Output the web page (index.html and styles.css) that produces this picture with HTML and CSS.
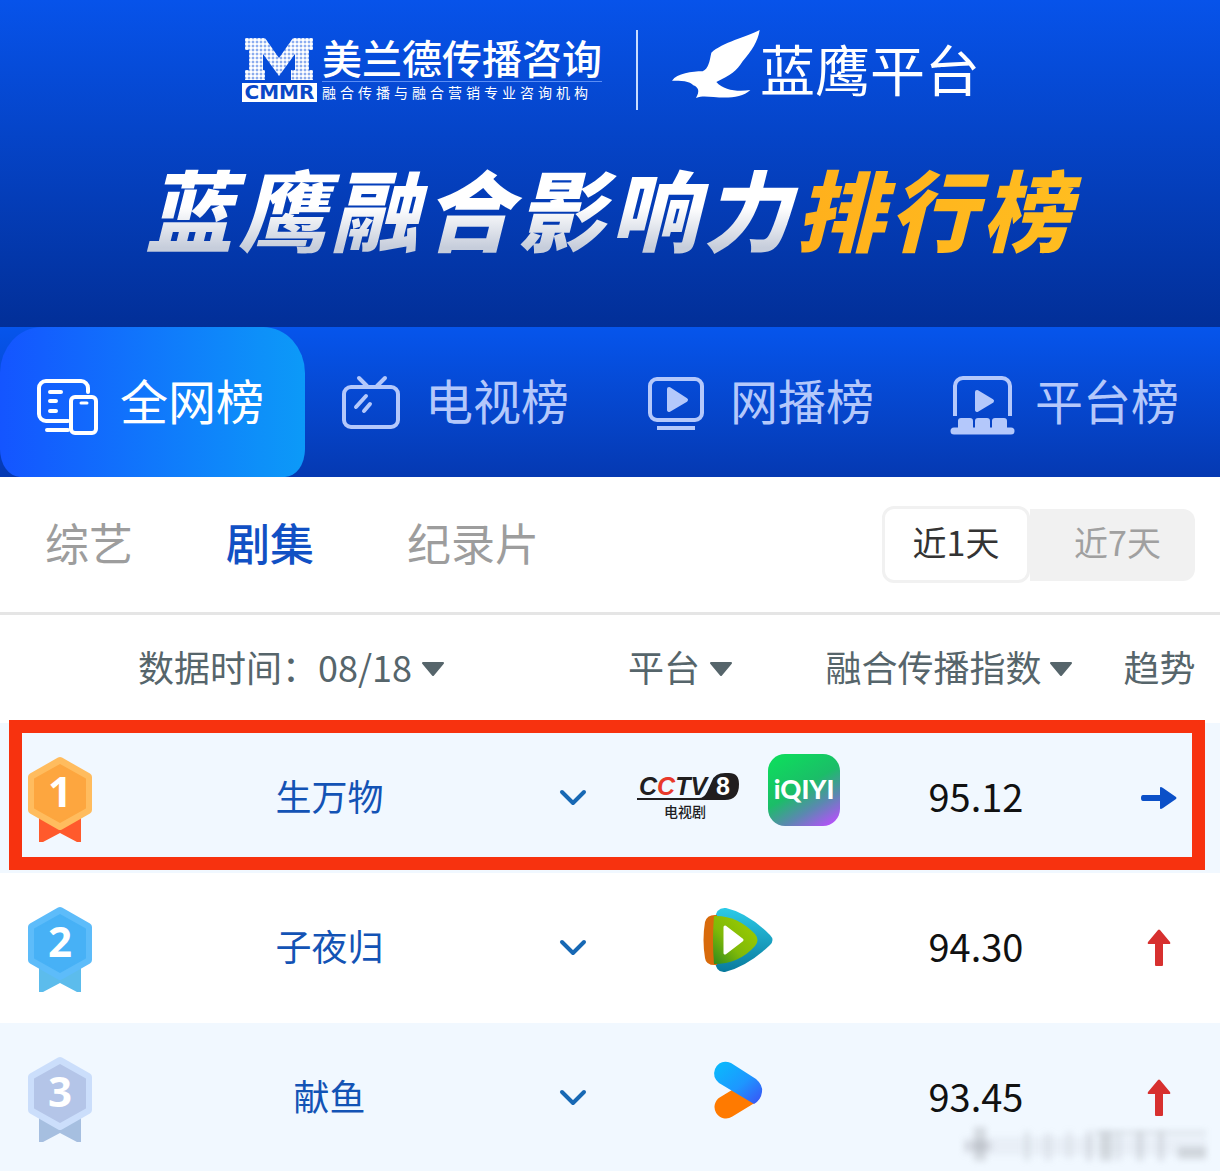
FILE: index.html
```
<!DOCTYPE html>
<html lang="zh-CN">
<head>
  <meta charset="UTF-8" />
  <meta name="viewport" content="width=device-width, initial-scale=1" />
  <title>蓝鹰融合影响力排行榜</title>
  <link rel="stylesheet" href="styles.css">
</head>
<body>

<header class="banner">
  <div class="brands">
    <div class="cmmr">
      <div class="cmmr-mark">
        <svg width="68" height="42" viewBox="0 0 68 42">
          <defs>
            <pattern id="dots" width="4" height="4" patternUnits="userSpaceOnUse">
              <rect width="4" height="4" fill="#fff" fill-opacity=".3" />
              <circle cx="2" cy="2" r="2" fill="#fff" />
            </pattern>
          </defs>
          <path fill="url(#dots)" d="M0 0H20L34 20L48 0H68V12H64V32H68V42H46V32H50V16L34 38L18 16V32H20V42H0V32H4V12H0Z" />
        </svg>
        <span class="cmmr-label">CMMR</span>
      </div>
      <div class="cmmr-text">
        <span class="cmmr-name">美兰德传播咨询</span>
        <span class="cmmr-sub">融合传播与融合营销专业咨询机构</span>
      </div>
    </div>
    <div class="eagle">
      <svg width="88" height="68" viewBox="150 28 264 204">
        <path fill="#fff" d="M413 28C375 48 300 66 268 96C262 124 260 142 242 152C210 152 165 158 150 180C175 180 205 180 214 194C230 200 234 212 222 232C240 225 255 228 275 229C315 233 360 232 385 208C350 214 305 210 283 184C325 165 345 150 362 122C388 92 408 62 413 28Z" />
      </svg>
      <span class="eagle-name">蓝鹰平台</span>
    </div>
  </div>
  <h1 class="title"><span class="title-main">蓝鹰融合影响力</span><span class="title-accent">排行榜</span></h1>
</header>

<!-- Main tabs -->
<nav class="tabs">
  <a class="tab active" href="#all">
    <svg width="64" height="60" viewBox="0 0 64 60" fill="none" stroke="currentColor" stroke-width="4" stroke-linecap="round">
      <path d="M52 20V16a7 7 0 0 0-7-7H10a7 7 0 0 0-7 7V42a7 7 0 0 0 7 7H32M11 58H32M14 20H25M14 29H20M14 39H20" />
      <rect x="35" y="25" width="25" height="36" rx="4" />
      <path d="M45 31H51" stroke-width="3" />
    </svg>
    <span>全网榜</span>
  </a>
  <a class="tab" href="#tv">
    <svg width="64" height="60" viewBox="0 0 64 60" fill="none" stroke="currentColor" stroke-width="4" stroke-linecap="round">
      <rect x="3" y="15" width="54" height="40" rx="7" />
      <path d="M18 6L26 14M44 6L36 14M15 35L25 24M23 39L29 32" />
    </svg>
    <span>电视榜</span>
  </a>
  <a class="tab" href="#web">
    <svg width="64" height="60" viewBox="0 0 64 60" fill="none" stroke="currentColor" stroke-width="4">
      <rect x="4" y="7" width="52" height="41" rx="7" />
      <path d="M11 56H49" />
      <path d="M23 17L40 28L23 38Z" fill="currentColor" stroke-width="4" stroke-linejoin="round" />
    </svg>
    <span>网播榜</span>
  </a>
  <a class="tab" href="#platform">
    <svg width="64" height="60" viewBox="0 0 64 60" fill="none" stroke="currentColor" stroke-width="4">
      <path d="M4 44V14a8 8 0 0 1 8-8H51a8 8 0 0 1 8 8V44" />
      <path d="M26 20L41 29L26 38Z" fill="currentColor" stroke-width="4" stroke-linejoin="round" />
      <path d="M3 59H60" stroke-width="7" stroke-linecap="round" />
      <path d="M7 60V49q0-3 3-3h9q3 0 3 3v11ZM24 60V49q0-3 3-3h9q3 0 3 3v11ZM41 60V49q0-3 3-3h9q3 0 3 3v11Z" fill="currentColor" stroke="none" />
    </svg>
    <span>平台榜</span>
  </a>
</nav>

<!-- Category + time range -->
<div class="filters">
  <div class="categories">
    <a href="#variety">综艺</a>
    <a class="active" href="#drama">剧集</a>
    <a href="#documentary">纪录片</a>
  </div>
  <div class="range">
    <button type="button" class="active">近1天</button>
    <button type="button">近7天</button>
  </div>
</div>

<main class="board">
  <table>
    <colgroup>
      <col class="col-rank"><col class="col-name"><col class="col-more"><col class="col-platform"><col class="col-gap"><col class="col-index"><col class="col-trend">
    </colgroup>
    <thead>
      <tr>
        <th colspan="3" class="head-date">
          <div class="head-cell">
            <label for="date">数据时间：</label>
            <select id="date"><option>08/18</option></select>
            <svg class="caret" width="24" height="16" viewBox="0 0 24 16"><path d="M2 2H22L12 14Z" /></svg>
          </div>
        </th>
        <th class="head-platform">
          <div class="head-cell">
            <select aria-label="平台"><option>平台</option></select>
            <svg class="caret" width="24" height="16" viewBox="0 0 24 16"><path d="M2 2H22L12 14Z" /></svg>
          </div>
        </th>
        <th colspan="2" class="head-index">
          <button type="button" class="head-cell">融合传播指数
            <svg class="caret" width="24" height="16" viewBox="0 0 24 16"><path d="M2 2H22L12 14Z" /></svg>
          </button>
        </th>
        <th class="head-trend">趋势</th>
      </tr>
    </thead>
    <tbody>
      <tr>
        <td class="rank">
          <svg class="medal gold" width="66" height="86" viewBox="0 0 66 86">
            <path class="ribbon" d="M12 58H54V85H50L33 76L16 85H12Z" />
            <path class="rim" d="M33 4L61 20V53L33 69L5 53V20Z" />
            <path class="face" d="M33 8L58 22V51L33 65L8 51V22Z" />
            <text x="33" y="50">1</text>
          </svg>
        </td>
        <td class="name">生万物</td>
        <td><button type="button" class="more" aria-label="展开"><svg width="28" height="20" viewBox="0 0 28 20"><path d="M3 4L14 15L25 4" /></svg></button></td>
        <td colspan="2">
          <div class="platforms">
            <svg class="cctv-logo" width="104" height="52" viewBox="0 0 104 52">
              <path d="M0 26H62Q67 26 70 20L75 9Q78 1 88 1H92Q102 1 102 12Q102 28 88 28H0Z" fill="#211e1f" />
              <text class="cctv" x="2" y="23"><tspan>C</tspan><tspan fill="#e8392b">C</tspan><tspan>TV</tspan></text>
              <text class="cctv-no" x="86" y="23">8</text>
              <text class="cctv-sub" x="48" y="45">电视剧</text>
            </svg>
            <svg width="72" height="72" viewBox="0 0 72 72">
              <defs>
                <linearGradient id="qiyi" x1=".3" y1="0" x2=".9" y2="1">
                  <stop offset="0" stop-color="#0fd95e" />
                  <stop offset=".42" stop-color="#1bbd68" />
                  <stop offset=".7" stop-color="#5b88b0" />
                  <stop offset="1" stop-color="#bc4dff" />
                </linearGradient>
              </defs>
              <rect width="72" height="72" rx="17" fill="url(#qiyi)" />
              <text class="qiyi" x="36" y="45">iQIYI</text>
            </svg>
          </div>
        </td>
        <td class="index">95.12</td>
        <td class="trend">
          <svg width="36" height="26" viewBox="0 0 36 26"><path d="M2 10H19V3Q19 1 22 3L35 12Q36 13 35 14L22 23Q19 25 19 23V16H2Q0 16 0 13T2 10Z" fill="#0b50c8" /></svg>
        </td>
      </tr>
      <tr>
        <td class="rank">
          <svg class="medal blue" width="66" height="86" viewBox="0 0 66 86">
            <path class="ribbon" d="M12 58H54V85H50L33 76L16 85H12Z" />
            <path class="rim" d="M33 4L61 20V53L33 69L5 53V20Z" />
            <path class="face" d="M33 8L58 22V51L33 65L8 51V22Z" />
            <text x="33" y="50">2</text>
          </svg>
        </td>
        <td class="name">子夜归</td>
        <td><button type="button" class="more" aria-label="展开"><svg width="28" height="20" viewBox="0 0 28 20"><path d="M3 4L14 15L25 4" /></svg></button></td>
        <td colspan="2">
          <div class="platforms">
            <svg width="70" height="66" viewBox="0 0 70 66">
              <defs>
                <linearGradient id="tx-blue" x1="0" y1="0" x2="0" y2="1"><stop offset="0" stop-color="#2ccbe8" /><stop offset="1" stop-color="#087a9d" /></linearGradient>
                <linearGradient id="tx-green" x1="1" y1="0" x2="0" y2="1"><stop offset="0" stop-color="#a2cf00" /><stop offset=".6" stop-color="#7fb908" /><stop offset="1" stop-color="#2f8a1c" /></linearGradient>
              </defs>
              <path d="M12 12Q13 0 23 1Q45 6 67 28Q72 33 67 38Q45 59 22 65Q13 66 12 54Z" fill="url(#tx-blue)" />
              <path d="M14 8Q4 7 2 15Q-1 33 2 51Q3 59 14 58Z" fill="#d86a0b" />
              <path d="M11 9Q34 8 52 27Q57 33 52 39Q36 57 11 57Q9 33 11 9Z" fill="url(#tx-green)" />
              <path d="M22 20L39 33L22 46Z" fill="#fff" stroke="#fff" stroke-width="3" stroke-linejoin="round" />
            </svg>
          </div>
        </td>
        <td class="index">94.30</td>
        <td class="trend">
          <svg width="24" height="38" viewBox="0 0 24 38"><path d="M8 36V15H2Q0 15 1 13L11 1Q12 0 13 1L23 13Q24 15 22 15H16V36Q16 37 15 37H9Q8 37 8 36Z" fill="#d7302f" /></svg>
        </td>
      </tr>
      <tr>
        <td class="rank">
          <svg class="medal silver" width="66" height="86" viewBox="0 0 66 86">
            <path class="ribbon" d="M12 58H54V85H50L33 76L16 85H12Z" />
            <path class="rim" d="M33 4L61 20V53L33 69L5 53V20Z" />
            <path class="face" d="M33 8L58 22V51L33 65L8 51V22Z" />
            <text x="33" y="50">3</text>
          </svg>
        </td>
        <td class="name">献鱼</td>
        <td><button type="button" class="more" aria-label="展开"><svg width="28" height="20" viewBox="0 0 28 20"><path d="M3 4L14 15L25 4" /></svg></button></td>
        <td colspan="2">
          <div class="platforms">
            <svg width="50" height="58" viewBox="0 0 50 58">
              <defs>
                <linearGradient id="yk" x1="0" y1="0" x2="1" y2="1"><stop offset="0" stop-color="#08bdfc" /><stop offset=".55" stop-color="#1d97ff" /><stop offset="1" stop-color="#3c50f5" /></linearGradient>
              </defs>
              <path d="M13 46L36 32" stroke="#ff7a00" stroke-width="23" stroke-linecap="round" />
              <path d="M18 2L43 18Q50 24 49 31Q48 39 41 43L6 22Q-1 16 2 8Q7-2 18 2Z" fill="url(#yk)" />
            </svg>
          </div>
        </td>
        <td class="index">93.45</td>
        <td class="trend">
          <svg width="24" height="38" viewBox="0 0 24 38"><path d="M8 36V15H2Q0 15 1 13L11 1Q12 0 13 1L23 13Q24 15 22 15H16V36Q16 37 15 37H9Q8 37 8 36Z" fill="#d7302f" /></svg>
        </td>
      </tr>
    </tbody>
  </table>

  <!-- frame around the first place -->
  <div class="frame"></div>

  <!-- faded stamp in the corner -->
  <svg class="stamp" width="244" height="36" viewBox="0 0 244 36">
    <g fill="#8b8f94">
      <rect x="0" y="10" width="242" height="18" opacity=".08" />
      <rect x="10" y="0" width="12" height="34" opacity=".28" />
      <rect x="0" y="14" width="28" height="10" opacity=".22" />
      <rect x="60" y="4" width="6" height="30" opacity=".16" />
      <rect x="80" y="6" width="8" height="28" opacity=".12" />
      <rect x="102" y="4" width="6" height="28" opacity=".12" />
      <rect x="122" y="4" width="6" height="30" opacity=".22" />
      <rect x="136" y="4" width="12" height="30" opacity=".26" />
      <rect x="152" y="4" width="5" height="30" opacity=".16" />
      <rect x="172" y="4" width="8" height="30" opacity=".2" />
      <rect x="194" y="4" width="6" height="30" opacity=".22" />
      <rect x="214" y="20" width="28" height="12" opacity=".28" />
      <rect x="130" y="4" width="112" height="3" opacity=".26" />
    </g>
  </svg>
</main>

</body>
</html>
```
FILE: styles.css
```
* {
  box-sizing: border-box;
}

body {
  margin: 0;
  background: #fff;
  color: #111;
  font-family: "Noto Sans CJK SC", sans-serif;
  font-size: 36px;
  overflow-x: hidden;
}

a {
  color: inherit;
  text-decoration: none;
}

button,
select {
  margin: 0;
  padding: 0;
  border: 0;
  background: none;
  color: inherit;
  font: inherit;
  cursor: pointer;
}

select {
  appearance: none;
}

svg {
  display: block;
  flex: none;
  overflow: visible;
}

/* Banner */
.banner {
  padding: 30px 0 69px;
  background: linear-gradient(#0753ea, #022f98);
  color: #fff;
  text-align: center;
}

.brands {
  display: flex;
  justify-content: center;
}

.cmmr {
  display: flex;
  gap: 5px;
  padding: 8px 34px 0 2px;
  border-right: 2px solid #c9dcff;
  height: 80px;
}

.cmmr-mark {
  display: flex;
  flex-direction: column;
  align-items: center;
  gap: 3px;
}

.cmmr-label {
  width: 75px;
  background: #fff;
  color: #0a48c8;
  font: bold 20px/19px "DejaVu Sans", sans-serif;
}

.cmmr-text {
  display: flex;
  flex-direction: column;
  text-align: left;
}

.cmmr-name {
  padding-bottom: 5px;
  border-bottom: 1px solid #5c8ef5;
  font-size: 40px;
  font-weight: 500;
  line-height: 38px;
}

.cmmr-sub {
  font-size: 14px;
  letter-spacing: 4px;
  line-height: 20px;
  white-space: nowrap;
}

.eagle {
  display: flex;
  padding-left: 34px;
}

.eagle-name {
  font-size: 55px;
  line-height: 74px;
}

.title {
  margin: 46px 0 0;
  font-size: 88px;
  font-style: italic;
  font-weight: 900;
  letter-spacing: 5px;
  line-height: 102px;
  white-space: nowrap;
}

/* the padding keeps the slanted glyph ends inside the gradient */
.title span {
  display: inline-block;
  margin-right: -24px;
  padding-right: 24px;
  background-clip: text;
  color: transparent;
}

.title-main {
  background-image: linear-gradient(#fff 50%, #c6cddb 90%);
}

.title-accent {
  background-image: linear-gradient(90deg, #ffb01c, #ffbe20);
}

/* Tabs */
.tabs {
  display: grid;
  grid-template-columns: repeat(4, 1fr);
  background: linear-gradient(#0655ec, #0539b2);
  color: #b4c8fb;
}

.tab {
  display: flex;
  align-items: center;
  justify-content: center;
  gap: 20px;
  height: 150px;
  padding-right: 5px;
  font-size: 48px;
  line-height: 56px;
}

.tab span {
  padding-bottom: 6px;
}

.tab.active {
  border-radius: 42px 42px 20px 20px / 46px 46px 28px 28px;
  background: linear-gradient(90deg, #1455ff, #0c9af8);
  color: #fff;
}

/* Filters */
.filters {
  display: flex;
  align-items: center;
  justify-content: space-between;
  height: 138px;
  padding: 0 25px 0 45px;
  border-bottom: 3px solid #e5e5e5;
}

.categories {
  display: flex;
  gap: 93px;
  padding-bottom: 6px;
  color: #9d9d9d;
  font-size: 44px;
  line-height: 64px;
}

.categories .active {
  color: #1150c4;
  font-weight: 500;
}

.range {
  display: flex;
  align-items: center;
  color: #a0a0a0;
  font-size: 34px;
  line-height: 50px;
}

.range button {
  width: 165px;
  height: 72px;
  padding: 0 0 6px 10px;
  border-radius: 0 12px 12px 0;
  background: #f1f1f1;
}

.range .active {
  width: 148px;
  height: 77px;
  padding-left: 0;
  border: 3px solid #f1f1f1;
  border-radius: 12px;
  background: #fff;
  color: #333;
}

/* Ranking */
.board {
  position: relative;
}

table {
  width: 100%;
  border-collapse: collapse;
  table-layout: fixed;
}

.col-rank { width: 10%; }
.col-name { width: 34%; }
.col-more { width: 6%; }
.col-platform { width: 17%; }
.col-gap { width: 4%; }
.col-index { width: 18%; }
.col-trend { width: 11%; }

th,
td {
  padding: 0;
  text-align: center;
}

th {
  height: 108px;
  padding-bottom: 6px;
  color: #56656b;
  font-weight: 400;
  line-height: 52px;
  white-space: nowrap;
}

.head-cell {
  display: flex;
  align-items: center;
  gap: 8px;
}

.head-cell label {
  margin-right: -8px;
}

.head-date {
  padding-left: 138px;
}

.head-platform {
  padding-left: 18px;
}

.head-index .head-cell {
  margin-left: 8px;
}

.caret {
  margin-top: 6px;
  fill: #56656b;
  stroke: #56656b;
  stroke-width: 2;
  stroke-linejoin: round;
}

tbody tr {
  height: 150px;
}

tbody tr:nth-child(odd) {
  background: #f1f8ff;
}

.rank {
  padding: 4px 0 0 27px;
}

.name,
.index {
  padding-bottom: 6px;
}

.name {
  color: #1353b5;
}

.more {
  display: block;
  margin: 0 auto;
}

.more svg {
  fill: none;
  stroke: #1768b4;
  stroke-width: 4;
  stroke-linecap: round;
  stroke-linejoin: round;
}

.platforms {
  display: flex;
  align-items: center;
  justify-content: center;
  gap: 27px;
  padding-bottom: 16px;
}

.index {
  font-size: 38px;
}

.head-trend,
.trend {
  padding-left: 13px;
}

.trend svg {
  margin: 0 auto;
}

/* Medals */
.medal text {
  fill: #fff;
  font: bold 42px "Open Sans", sans-serif;
  text-anchor: middle;
}

.rim,
.face {
  stroke-width: 8;
  stroke-linejoin: round;
}

.face {
  stroke-width: 2;
}

.gold .ribbon { fill: #ff5a2c; }
.gold .rim { fill: #ffbc5e; stroke: #ffbc5e; }
.gold .face { fill: #fda63f; stroke: #fda63f; }

.blue .ribbon { fill: #5cbcec; }
.blue .rim { fill: #5dbcfa; stroke: #5dbcfa; }
.blue .face { fill: #47b1f6; stroke: #47b1f6; }

.silver .ribbon { fill: #a6bfe0; }
.silver .rim { fill: #cbdefb; stroke: #cbdefb; }
.silver .face { fill: #b4c5e8; stroke: #b4c5e8; }

/* Platform logos */
.cctv-logo {
  margin-top: 16px;
}

.cctv {
  fill: #211e1f;
  font: italic bold 25px "Liberation Sans", sans-serif;
}

.cctv-no {
  fill: #fff;
  font: bold 25px "Liberation Sans", sans-serif;
  text-anchor: middle;
}

.cctv-sub {
  fill: #211e1f;
  font-size: 14px;
  font-weight: 500;
  text-anchor: middle;
}

.qiyi {
  fill: #fff;
  font: 900 26px Lato, sans-serif;
  text-anchor: middle;
}

.frame {
  position: absolute;
  top: 105px;
  right: 15px;
  left: 9px;
  height: 150px;
  border: 13px solid #f7320f;
  pointer-events: none;
}

.stamp {
  position: absolute;
  right: 12px;
  bottom: 10px;
  filter: blur(3px);
}
```
